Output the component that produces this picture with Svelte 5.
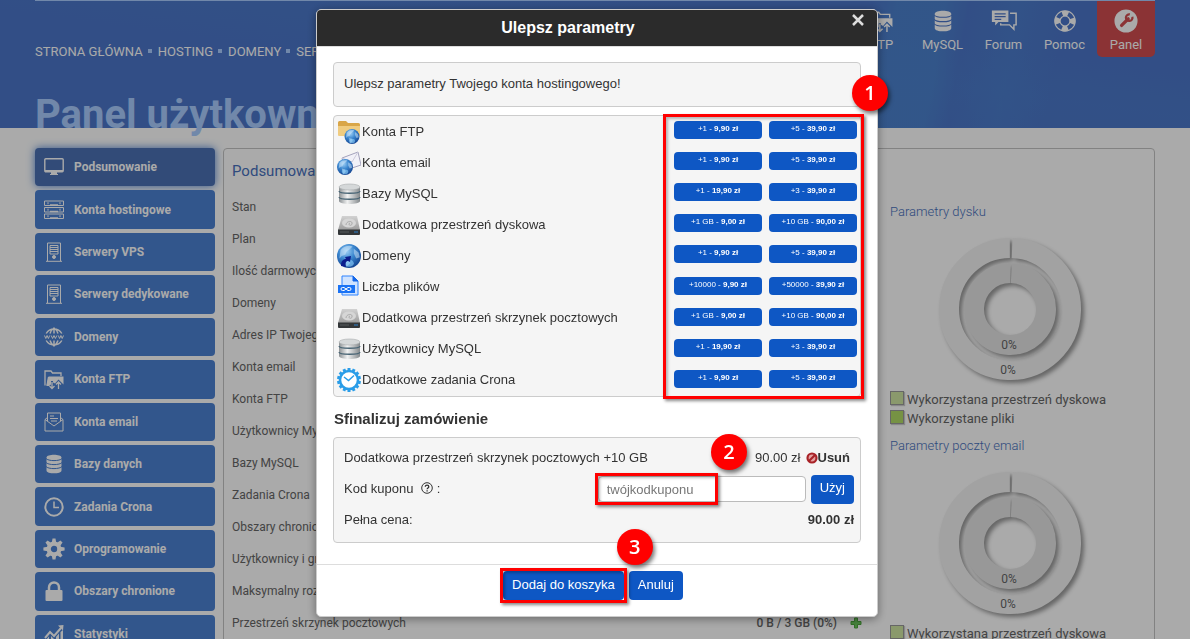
<script lang="ts">
type Offer = { icon: string; name: string; opts: [string, string][] };

const crumbs = ["Strona główna", "Hosting", "Domeny", "Serwery"];
const top = [
	{ icon: "ftp", label: "FTP" },
	{ icon: "db", label: "MySQL" },
	{ icon: "forum", label: "Forum" },
	{ icon: "help", label: "Pomoc" },
	{ icon: "wrench", label: "Panel" },
];
const side = [
	{ icon: "monitor", label: "Podsumowanie" },
	{ icon: "rack", label: "Konta hostingowe" },
	{ icon: "tower", label: "Serwery VPS" },
	{ icon: "tower", label: "Serwery dedykowane" },
	{ icon: "www", label: "Domeny" },
	{ icon: "ftp", label: "Konta FTP" },
	{ icon: "mail", label: "Konta email" },
	{ icon: "db", label: "Bazy danych" },
	{ icon: "clock", label: "Zadania Crona" },
	{ icon: "gear", label: "Oprogramowanie" },
	{ icon: "lock", label: "Obszary chronione" },
	{ icon: "stats", label: "Statystyki" },
];
const params = [
	"Stan", "Plan", "Ilość darmowych domen", "Domeny", "Adres IP Twojego konta", "Konta email", "Konta FTP",
	"Użytkownicy MySQL", "Bazy MySQL", "Zadania Crona", "Obszary chronione", "Użytkownicy i grupy",
	"Maksymalny rozmiar skrzynki", "Przestrzeń skrzynek pocztowych",
];
const charts = ["Parametry dysku", "Parametry poczty email"];

const offers: Offer[] = [
	{ icon: "folder", name: "Konta FTP", opts: [["+1", "9,90"], ["+5", "39,90"]] },
	{ icon: "letter", name: "Konta email", opts: [["+1", "9,90"], ["+5", "39,90"]] },
	{ icon: "base", name: "Bazy MySQL", opts: [["+1", "19,90"], ["+3", "39,90"]] },
	{ icon: "disk", name: "Dodatkowa przestrzeń dyskowa", opts: [["+1 GB", "9,00"], ["+10 GB", "90,00"]] },
	{ icon: "globe", name: "Domeny", opts: [["+1", "9,90"], ["+5", "39,90"]] },
	{ icon: "file", name: "Liczba plików", opts: [["+10000", "9,90"], ["+50000", "39,90"]] },
	{ icon: "disk", name: "Dodatkowa przestrzeń skrzynek pocztowych", opts: [["+1 GB", "9,00"], ["+10 GB", "90,00"]] },
	{ icon: "base", name: "Użytkownicy MySQL", opts: [["+1", "19,90"], ["+3", "39,90"]] },
	{ icon: "cron", name: "Dodatkowe zadania Crona", opts: [["+1", "9,90"], ["+5", "39,90"]] },
];

let coupon = $state("");
const teeth = (n: number) => Array.from({ length: n }, (_, i) => (i * 360) / n);
</script>

{#snippet glyph(name: string)}
	<svg class="glyph" viewBox="0 0 20 20" fill="none" stroke="currentColor" aria-hidden="true">
		{#if name === "monitor"}
			<rect x=".8" y="1.8" width="18.4" height="13" rx="1" stroke-width="1.4" />
			<path d="M1 13h18v2H1zM7 15h6v2h1v1H6v-1h1z" fill="currentColor" stroke="none" />
		{:else if name === "rack"}
			{#each [1, 7.5, 14] as y}
				<path d="M.5 {y}h19v4.500H.5z" />
				<path d="M6 {y + 4}h8" stroke-width="1.500" />
				<path d="M4 {y + 1.2}v2M16 {y + 1.2}v2" />
			{/each}
		{:else if name === "tower"}
			<path d="M3.500 19V1h13v18M2 19.300h16" />
			<path d="M6 3.500h8v8.500H6zM6 5.500h8M6 7.500h8M6 9.500h8" />
			<circle cx="10" cy="15" r="1.500" fill="currentColor" />
		{:else if name === "www"}
			<path d="M2.200 6.500a9 9 0 0 1 15.600 0M2.200 13.500a9 9 0 0 0 15.600 0M10 1v5.500M10 13.500V19M6 6.500C7 3.500 8.500 2 10 1c1.500 1 3 2.500 4 5.500M6 13.500c1 3 2.500 4.500 4 5.500 1.500-1 3-2.500 4-5.500" stroke-width="1.500" />
			<path d="M.500 8.500l1.300 3 1.300-3 1.300 3 1.300-3M7.200 8.500l1.400 3 1.400-3 1.400 3 1.400-3M14.300 8.500l1.300 3 1.300-3 1.300 3 1.300-3" />
		{:else if name === "ftp"}
			<path d="M1 16.500V2h6l1.500 2H17v3M3 16.500L4.500 8" stroke-width="1.300" />
			<path d="M4.500 7.500h15v8l-5-5-3.500 4-2-1v-1.500h-2v3.500L5 17H2.500z" fill="currentColor" stroke="none" />
			<path d="M8 13v6.500M5.500 17L8 19.500l2.500-2.500M14.500 20v-7M12 15.500l2.500-2.500 2.500 2.500" stroke-width="1.300" />
		{:else if name === "mail"}
			<path d="M1 7.500V19h18V7.500L10 14zM3.500 9V1h13v8M1 7.500l2.500-2M19 7.500l-2.500-2" />
			<path d="M6 4h4M6 6.500h8M7 9h6" />
		{:else if name === "db"}
			<path d="M2.500 3.500C2.500-.3 17.500-.3 17.500 3.500v13c0 3.800-15 3.800-15 0z" fill="currentColor" stroke="none" />
			<path class="cut" d="M2 4.500c2 2.800 14 2.800 16 0M2 8.500c2 2.800 14 2.800 16 0M2 12.500c2 2.800 14 2.800 16 0" />
		{:else if name === "clock"}
			<circle cx="10" cy="10" r="8.700" stroke-width="2" />
			<path d="M10 4.500v6h5" stroke-width="1.500" />
		{:else if name === "gear"}
			<circle cx="10" cy="10" r="5.300" stroke-width="4.200" />
			{#each teeth(8) as a}
				<path d="M7.800 3.500L8.500 -.6h3L12.200 3.500z" fill="currentColor" stroke="none" transform="rotate({a} 10 10)" />
			{/each}
		{:else if name === "lock"}
			<path d="M5 9.500V6.500a5 5 0 0 1 10 0v3" stroke-width="2.500" />
			<rect x="1.500" y="9" width="17" height="11" rx="1" fill="currentColor" stroke="none" />
		{:else if name === "stats"}
			<path d="M1 14l5-6 4 4 7-8" stroke-width="2" />
			<path d="M14 1.500l5.500-.5-.5 5.500zM2 16l3-3.500V20H2zM7 12l3 3v5H7zM12 13l3-3.500V20h-3zM16.500 8l2.500-2v14h-2.500z" fill="currentColor" stroke="none" />
		{:else if name === "forum"}
			<path d="M-1 .5h15v10.500H5l-3 3v-3h-3z" fill="currentColor" stroke="none" />
			<path class="cut" d="M1.500 3.500h10M1.500 6h10M1.500 8.500h6" />
			<path d="M15.500 3h5.500v10.500h-2v4l-4-4H7v-1.500" stroke-width="1.300" />
		{:else if name === "help"}
			<circle cx="10" cy="10" r="6.900" stroke-width="5" stroke-dasharray="5.420 5.419" stroke-dashoffset="2.700" />
			<circle cx="10" cy="10" r="9.300" />
			<circle cx="10" cy="10" r="4.500" />
		{:else if name === "wrench"}
			<circle cx="10" cy="10" r="10.500" fill="currentColor" stroke="none" />
			<path class="cut" d="M6 14l6-6" stroke-width="3" stroke-linecap="round" />
			<path class="cut" d="M15.800 6.200a3 3 0 1 1-2.300-2.200" stroke-width="2" />
		{/if}
	</svg>
{/snippet}

{#snippet earth(cx: number, cy: number, r: number)}
	<circle {cx} {cy} {r} fill="url(#sea)" />
	<g transform="translate({cx} {cy}) scale({r / 10})">
		<path d="M-7-5C-4-9 1-9 3-8L0-5-2-4-3-1-6 0-8 2zM4-6l4 3 1 4-3 1-2-4zM-4 2l4 1 1 3-3 3z" fill="#d8ecfb" opacity=".5" />
		<ellipse cy="6" rx="4" ry="3" fill="#8fd4ff" opacity=".6" />
	</g>
{/snippet}

{#snippet picture(name: string)}
	<svg class="picture" viewBox="0 0 24 24" aria-hidden="true">
		{#if name === "folder"}
			<path d="M1 2.500Q1 1 2.500 1H9l2 2h10.500Q23 3 23 4.500V15H1z" fill="#d9a648" />
			<path d="M1 6h22v9q0 1-1 1H2q-1 0-1-1z" fill="#f0cc80" />
			{@render earth(15, 16.500, 7.500)}
		{:else if name === "letter"}
			<path d="M5 7l16-6 3 13-15 5z" fill="#f1f1f8" stroke="#a4a3bd" />
			<path d="M5 7l10 4 6-10" fill="none" stroke="#cccbdb" />
			{@render earth(8, 16, 8)}
		{:else if name === "base"}
			<path d="M2 5v14c0 4 21 4 21 0V5z" fill="url(#steel)" />
			<ellipse cx="12.500" cy="5" rx="10.500" ry="3" fill="#d5d8d9" stroke="#a7abad" stroke-width=".6" />
			<path d="M2 9c0 3 21 3 21 0M2 15c0 3 21 3 21 0" fill="none" stroke="#496575" stroke-width="1.300" />
		{:else if name === "disk"}
			<path d="M5 3h15l3 14H1z" fill="url(#lid)" />
			<ellipse cx="12" cy="10" rx="7" ry="4.500" fill="#d6d6d6" />
			<path d="M9 12c0-4 7-5 6-1-1 3-5 0-2-1" fill="none" stroke="#aaa" />
			<path d="M1 16.500h22V21q0 1-1 1H2q-1 0-1-1z" fill="#333638" />
			<path d="M3 19h9" stroke="#565a5c" />
			<path d="M17 19h4" stroke="#2f5a80" stroke-width="2" />
		{:else if name === "globe"}
			{@render earth(12, 12, 12)}
			<path d="M4 22c0-5 2-7 5-7l-1-2 6-1-1 6-2-1c-2 0-3 2-2 6z" fill="#0b1c8d" />
		{:else if name === "file"}
			<path d="M5 1h11l5 5v14H5z" fill="#cfe3ff" stroke="#2f83ff" />
			<path d="M16 1v5h5z" fill="#1467e8" stroke="#1467e8" />
			<rect x="1" y="10" width="17" height="8" fill="#1a73f5" />
			<path d="M7 12.500H5.500a1.500 1.500 0 0 0 0 3H7l4-3h1.500a1.500 1.500 0 0 1 0 3H11l-4-3" fill="none" stroke="#fff" />
		{:else if name === "cron"}
			<circle cx="12" cy="12" r="9" fill="#fff" stroke="#2a9de8" stroke-width="2.500" />
			{#each teeth(14) as a}
				<path d="M10.500 0h3v3h-3z" fill="#2a9de8" transform="rotate({a} 12 12)" />
			{/each}
			<path d="M7 9l4.500 3.500L17 7.500" fill="none" stroke="#2a9de8" stroke-width="1.500" />
		{/if}
	</svg>
{/snippet}

<svg class="defs" width="0" height="0" aria-hidden="true">
	<defs>
		<radialGradient id="sea" cx=".4" cy=".3" r=".75">
			<stop offset="0" stop-color="#9fd0f5" />
			<stop offset=".45" stop-color="#3a86cf" />
			<stop offset="1" stop-color="#103f8c" />
		</radialGradient>
		<linearGradient id="steel">
			<stop offset="0" stop-color="#8c9194" />
			<stop offset=".4" stop-color="#f0f1f1" />
			<stop offset="1" stop-color="#84898c" />
		</linearGradient>
		<linearGradient id="lid" x2="0" y2="1">
			<stop offset="0" stop-color="#d2d2d2" />
			<stop offset="1" stop-color="#9c9c9c" />
		</linearGradient>
	</defs>
</svg>

<div class="page">
	<header class="hero">
		<div class="wrap hero-in">
			<div class="hero-left">
				<nav class="crumbs">
					{#each crumbs as c}<a href="#top">{c}</a>{/each}
				</nav>
				<h1>Panel użytkownika</h1>
			</div>
			<nav class="top">
				{#each top as t}
					<a href="#top" class:panel={t.icon === "wrench"}>{@render glyph(t.icon)}{t.label}</a>
				{/each}
			</nav>
		</div>
	</header>

	<div class="wrap content">
		<nav class="side">
			{#each side as s, i}
				<a href="#top" class:active={i === 0}>{@render glyph(s.icon)}{s.label}</a>
			{/each}
		</nav>
		<main class="board">
			<section class="summary">
				<h2>Podsumowanie</h2>
				<table>
					<tbody>
						{#each params as p, i}
							<tr>
								<th scope="row">{p}</th>
								<td>
									{#if i === params.length - 1}
										<div class="usage">
											0 B / 3 GB (0%)
											<svg width="12" height="12" viewBox="0 0 12 12" aria-hidden="true"><path d="M4.500 1h3v3.500H11v3H7.500V11h-3V7.500H1v-3h3.500z" fill="#6cc95c" stroke="#4ca83c" /></svg>
										</div>
									{/if}
								</td>
							</tr>
						{/each}
					</tbody>
				</table>
			</section>
			<aside class="charts">
				{#each charts as c}
					<section class="chart">
						<h3>{c}</h3>
						<svg width="160" height="168" viewBox="0 0 160 168" aria-hidden="true">
							<g class="ring"><circle cx="80" cy="87" r="61" stroke="#f4f4f4" stroke-dasharray="380.300 3" transform="rotate(-88 80 87)" /></g>
							<g class="ring"><circle cx="80" cy="87" r="36" stroke="#e5e5e5" stroke-dasharray="225.200 1" transform="rotate(-88 80 87)" /></g>
							<text x="79" y="127">0%</text>
							<text x="78" y="152">0%</text>
						</svg>
						<p><i class="swatch pale"></i>Wykorzystana przestrzeń dyskowa</p>
						<p><i class="swatch"></i>Wykorzystane pliki</p>
					</section>
				{/each}
			</aside>
		</main>
	</div>
</div>

<div class="backdrop">
	<div class="modal" role="dialog" aria-labelledby="modal-title">
		<div class="modal-head">
			<h2 id="modal-title">Ulepsz parametry</h2>
			<button class="close" aria-label="Zamknij">
				<svg width="12" height="12" viewBox="0 0 12 12" aria-hidden="true"><path d="M1 1l10 10M11 1L1 11" stroke="#ddd" stroke-width="2.500" /></svg>
			</button>
		</div>
		<div class="modal-body">
			<p class="box info">Ulepsz parametry Twojego konta hostingowego!<span class="badge b1">1</span></p>
			<div class="box offers">
				{#each offers as o}
					<div class="offer">
						{@render picture(o.icon)}
						<span class="offer-name">{o.name}</span>
						{#each o.opts as [qty, price]}
							<button class="buy">{qty} - <b>{price} zł</b></button>
						{/each}
					</div>
				{/each}
				<div class="frame f-offers"></div>
			</div>
			<h3>Sfinalizuj zamówienie</h3>
			<div class="box order">
				<div class="line">
					<span>Dodatkowa przestrzeń skrzynek pocztowych +10 GB</span>
					<span class="cost">90.00 zł
						<button class="remove">
							<svg width="12" height="12" viewBox="0 0 12 12" aria-hidden="true"><circle cx="6" cy="6" r="4.500" fill="#e4a3a3" stroke="#a82227" stroke-width="2.200" /><path d="M3 9l6-6" stroke="#a82227" stroke-width="2.200" /></svg>Usuń
						</button>
					</span>
					<span class="badge b2">2</span>
				</div>
				<div class="line coupon">
					<label for="coupon">Kod kuponu
						<svg width="12" height="12" viewBox="0 0 12 12" aria-hidden="true"><circle cx="6" cy="6" r="5.300" fill="none" stroke="#333" /><path d="M4.300 4.800c0-2.300 3.500-2.100 3.500-.1C7.800 6 6.100 6 6.100 7.300M6.100 8.200v1.200" fill="none" stroke="#333" stroke-width="1.300" /></svg>
						:</label>
					<div class="field">
						<input id="coupon" type="text" placeholder="twójkodkuponu" bind:value={coupon} />
						<div class="frame f-coupon"></div>
					</div>
					<button class="btn">Użyj</button>
				</div>
				<div class="line"><span>Pełna cena:</span><b>90.00 zł</b></div>
			</div>
		</div>
		<div class="modal-foot">
			<div class="field">
				<button class="btn">Dodaj do koszyka</button>
				<div class="frame f-cart"></div>
				<span class="badge b3">3</span>
			</div>
			<button class="btn">Anuluj</button>
		</div>
	</div>
</div>

<style>
:global(body){margin:0;background:#fff}
h1,h2,h3,p{margin:0}
a{text-decoration:none;color:inherit}
button{font:inherit;color:inherit;border:0;padding:0;background:none;cursor:pointer}
.defs{position:absolute}
.page{height:100vh;overflow:hidden;font-family:Roboto,"Liberation Sans",sans-serif;font-size:13px;color:#666}
.wrap{max-width:1120px;margin:0 auto}
.glyph{width:20px;height:20px;flex:none;overflow:visible}
.cut{stroke:var(--cut,#4b76c9)}

.hero{height:128px;color:#fff;background:linear-gradient(100deg,transparent 72%,#4c8ad288 74%,#4c8ad288 78%,transparent 80%,#4c84d066 84%,transparent 88%),linear-gradient(8deg,transparent 40%,#4c7ecd66 60%,transparent 75%),#4b76c9}
.hero-in{display:flex;justify-content:space-between;border-top:1px solid #aacdff}
.crumbs{display:flex;padding-top:41px;line-height:20px;text-transform:uppercase;white-space:nowrap}
.crumbs a+a::before{content:"";display:inline-block;width:4px;height:4px;margin:0 6px 3px 5px;background:#aacdff}
h1{margin-top:29px;font-size:40px;line-height:48px;font-weight:700;color:#aacdff;white-space:nowrap}
.top{display:flex}
.top a{display:flex;flex-direction:column;align-items:center;gap:5px;width:61px;padding-top:9px;line-height:16px;box-sizing:border-box;height:56px}
.top .glyph{width:22px;height:22px}
.top .panel{--cut:#d14d50;width:58px;margin-left:2px;background:#d14d50;border-radius:0 0 5px 5px}

.content{display:flex;gap:8px;padding-top:20px}
.side{display:grid;grid-auto-rows:1fr;gap:4px;width:180px;height:505px;flex:none}
.side a{--cut:#4b81d2;display:flex;align-items:center;gap:10px;padding-left:9px;border-radius:4px;background:#4b81d2;color:#fff;font-size:12px;font-weight:700}
.side .active{background:#4b71b4;box-shadow:0 0 8px #4b81d2}
.board{flex:1;display:grid;grid-template-columns:1fr 264px;height:600px;border:1px solid #c4c4c4;border-radius:4px}
.summary{padding:12px 28px 0 8px}
h2{font-weight:400}
.summary h2{font-size:15px;line-height:20px;color:#4871bd}
.summary table{width:100%;margin-top:10px;border-collapse:collapse}
.summary th{padding:0;height:32px;text-align:left;font-weight:400;font-size:12px;white-space:nowrap}
.summary td{padding:0}
.usage{display:flex;justify-content:flex-end;align-items:center;gap:13px;font-size:12px;font-weight:500}
.charts{padding-top:53px}
.chart{display:flex;flex-direction:column;padding-bottom:8px}
.chart h3{font-size:13px;line-height:20px;font-weight:300;color:#4871bd}
.chart svg{margin-left:40px}
.ring{fill:none;stroke-width:20;filter:drop-shadow(3px 3px 2px #0006)}
.chart text{font-size:12px;fill:#666;text-anchor:middle}
.chart p{display:flex;align-items:center;gap:3px;line-height:19px;white-space:nowrap}
.swatch{width:12px;height:12px;margin-bottom:4px;border:1px solid #999;background:#b2dc67;box-shadow:1px 1px 1px #0003}
.swatch.pale{background:#cfe6a2}

.backdrop{position:fixed;inset:0;display:flex;align-items:flex-start;justify-content:center;padding:9px 0 0 4px;background:#0005;font:13px/20px "Liberation Sans",Arial,sans-serif;color:#333}
.modal{width:560px;background:#fff;border:1px solid #ccc;border-radius:5px;box-shadow:0 2px 10px #0006}
.modal-head{position:relative;background:#2b2b2b;color:#fff;border-bottom:1px solid #ddd;border-radius:4px 4px 0 0}
.modal-head h2{padding-right:58px;font-size:16px;line-height:36px;font-weight:700;text-align:center}
.close{position:absolute;top:4px;right:13px;width:12px;height:12px;line-height:0}
.modal-body{padding:15px 16px 21px}
.box{position:relative;border:1px solid #ccc;border-radius:4px;background:#f5f5f5}
.info{padding:11px 10px 12px}
.offers{display:grid;grid-auto-rows:1fr;height:280px;margin-top:8px}
.offer{display:flex;align-items:center;gap:7px;padding:0 3px}
.picture{width:24px;height:24px;margin-right:-6px}
.offer-name{flex:1}
.buy{width:88px;height:18px;margin-bottom:3px;padding-bottom:2px;border-radius:4px;background:#0e57c4;color:#fff;font-size:8px;line-height:16px}
.modal-body h3{margin:12px 0 8px 1px;font-size:15px;line-height:20px;font-weight:700}
.order{display:flex;flex-direction:column;padding:9px 6px 11px 10px}
.line{position:relative;display:flex;justify-content:space-between;align-items:center;line-height:22px}
.cost{display:flex;gap:5px;padding-right:4px}
.remove{display:flex;align-items:center;font-weight:700}
.coupon{height:40px;gap:5px}
.coupon label{flex:1}
.coupon label svg{margin:0 0 -1px 4px}
.field{position:relative;display:flex}
input{box-sizing:border-box;width:208px;height:26px;padding:2px 8px;border:1px solid #bbb;border-radius:4px;font:inherit;color:#555;background:#fff}
input::placeholder{color:#777}
.btn{height:29px;padding:0 9px 2px;border-radius:4px;background:#0e57c4;color:#fff}
.modal-foot{display:flex;justify-content:center;gap:5px;padding:6px 8px 16px 0;border-top:1px solid #ddd}

/* numbered steps and the frames they point to */
.frame{position:absolute;border:3px solid #f00;box-shadow:2px 2px 3px #0007,inset 2px 2px 3px #0004;pointer-events:none}
.f-offers{top:-2px;bottom:-3px;right:-4px;width:195px}
.f-coupon{top:-3px;bottom:-3px;left:-3px;width:117px}
.f-cart{inset:-3px}
.badge{position:absolute;width:36px;height:36px;border-radius:50%;background:#f00;color:#fff;font:600 20px/36px "Open Sans","Noto Sans",sans-serif;text-align:center;box-shadow:2px 3px 4px #0008}
.b1{top:12px;right:-28px}
.b2{top:-13px;right:107px}
.b3{top:-42px;right:-29px}
</style>
